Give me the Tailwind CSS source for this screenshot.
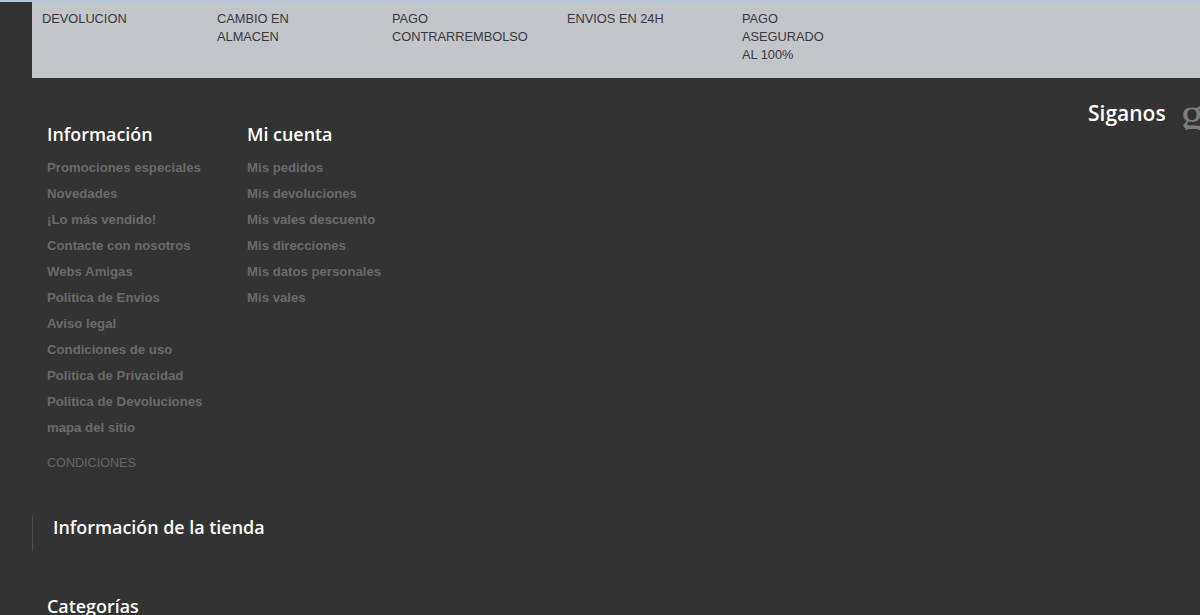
<!DOCTYPE html>
<html lang="en">
<head>
  <meta charset="UTF-8">
  <title>Footer</title>
  <script src="https://cdn.jsdelivr.net/npm/@tailwindcss/browser@4"></script>
</head>
<body class="bg-[#333333] font-['Liberation_Sans',sans-serif] overflow-hidden">
  <div class="h-[615px] w-[1200px] overflow-hidden">
    <div class="h-[2px] bg-[#b4c7de]"></div>
    <!-- Reassurance strip -->
    <div class="ml-8 h-[76px] bg-[#c2c5c9] pt-[8px] pl-[10px] flex text-[12.8px] leading-[18px] text-[#3a3a3f]">
      <div class="w-[175px]">DEVOLUCION</div>
      <div class="w-[175px]">CAMBIO EN<br>ALMACEN</div>
      <div class="w-[175px]">PAGO<br>CONTRARREMBOLSO</div>
      <div class="w-[175px]">ENVIOS EN 24H</div>
      <div class="w-[175px]">PAGO<br>ASEGURADO<br>AL 100%</div>
    </div>

    <div class="flex justify-between">
      <!-- Link columns -->
      <div>
        <div class="ml-[47px] mt-[43px] flex">
          <div class="w-[200px]">
            <h4 class="font-['Open_Sans',sans-serif] font-semibold text-[17.9px] leading-[26px] text-white">Información</h4>
            <ul class="mt-[8px] text-[13.2px] font-bold leading-[26px] text-[#6a6a6a]">
              <li>Promociones especiales</li>
              <li>Novedades</li>
              <li>¡Lo más vendido!</li>
              <li>Contacte con nosotros</li>
              <li>Webs Amigas</li>
              <li>Politica de Envios</li>
              <li>Aviso legal</li>
              <li>Condiciones de uso</li>
              <li>Politica de Privacidad</li>
              <li>Politica de Devoluciones</li>
              <li>mapa del sitio</li>
            </ul>
            <p class="mt-[9px] text-[12.6px] leading-[26px] text-[#666666]">CONDICIONES</p>
          </div>
          <div class="w-[200px]">
            <h4 class="font-['Open_Sans',sans-serif] font-semibold text-[17.9px] leading-[26px] text-white">Mi cuenta</h4>
            <ul class="mt-[8px] text-[13.2px] font-bold leading-[26px] text-[#6a6a6a]">
              <li>Mis pedidos</li>
              <li>Mis devoluciones</li>
              <li>Mis vales descuento</li>
              <li>Mis direcciones</li>
              <li>Mis datos personales</li>
              <li>Mis vales</li>
            </ul>
          </div>
        </div>
        <div class="ml-8 mt-[40px] h-[35px] border-l border-[#4d4d4d] pl-5 font-['Open_Sans',sans-serif] font-semibold text-[17.9px] leading-[23px] text-white">Información de la tienda</div>
        <h4 class="ml-[47px] mt-[42px] font-['Open_Sans',sans-serif] font-semibold text-[17.9px] leading-[26px] text-white">Categorías</h4>
      </div>

      <!-- Follow us -->
      <div class="mt-[18px] flex h-[34px] w-[112px] shrink-0 items-center overflow-hidden">
        <span class="font-['Open_Sans',sans-serif] font-semibold text-[21px] leading-[34px] text-white">Siganos</span>
        <span class="ml-[15px] font-['Liberation_Serif',serif] text-[47px] leading-[34px] text-[#7d7d7d]">g</span>
      </div>
    </div>
  </div>
</body>
</html>
